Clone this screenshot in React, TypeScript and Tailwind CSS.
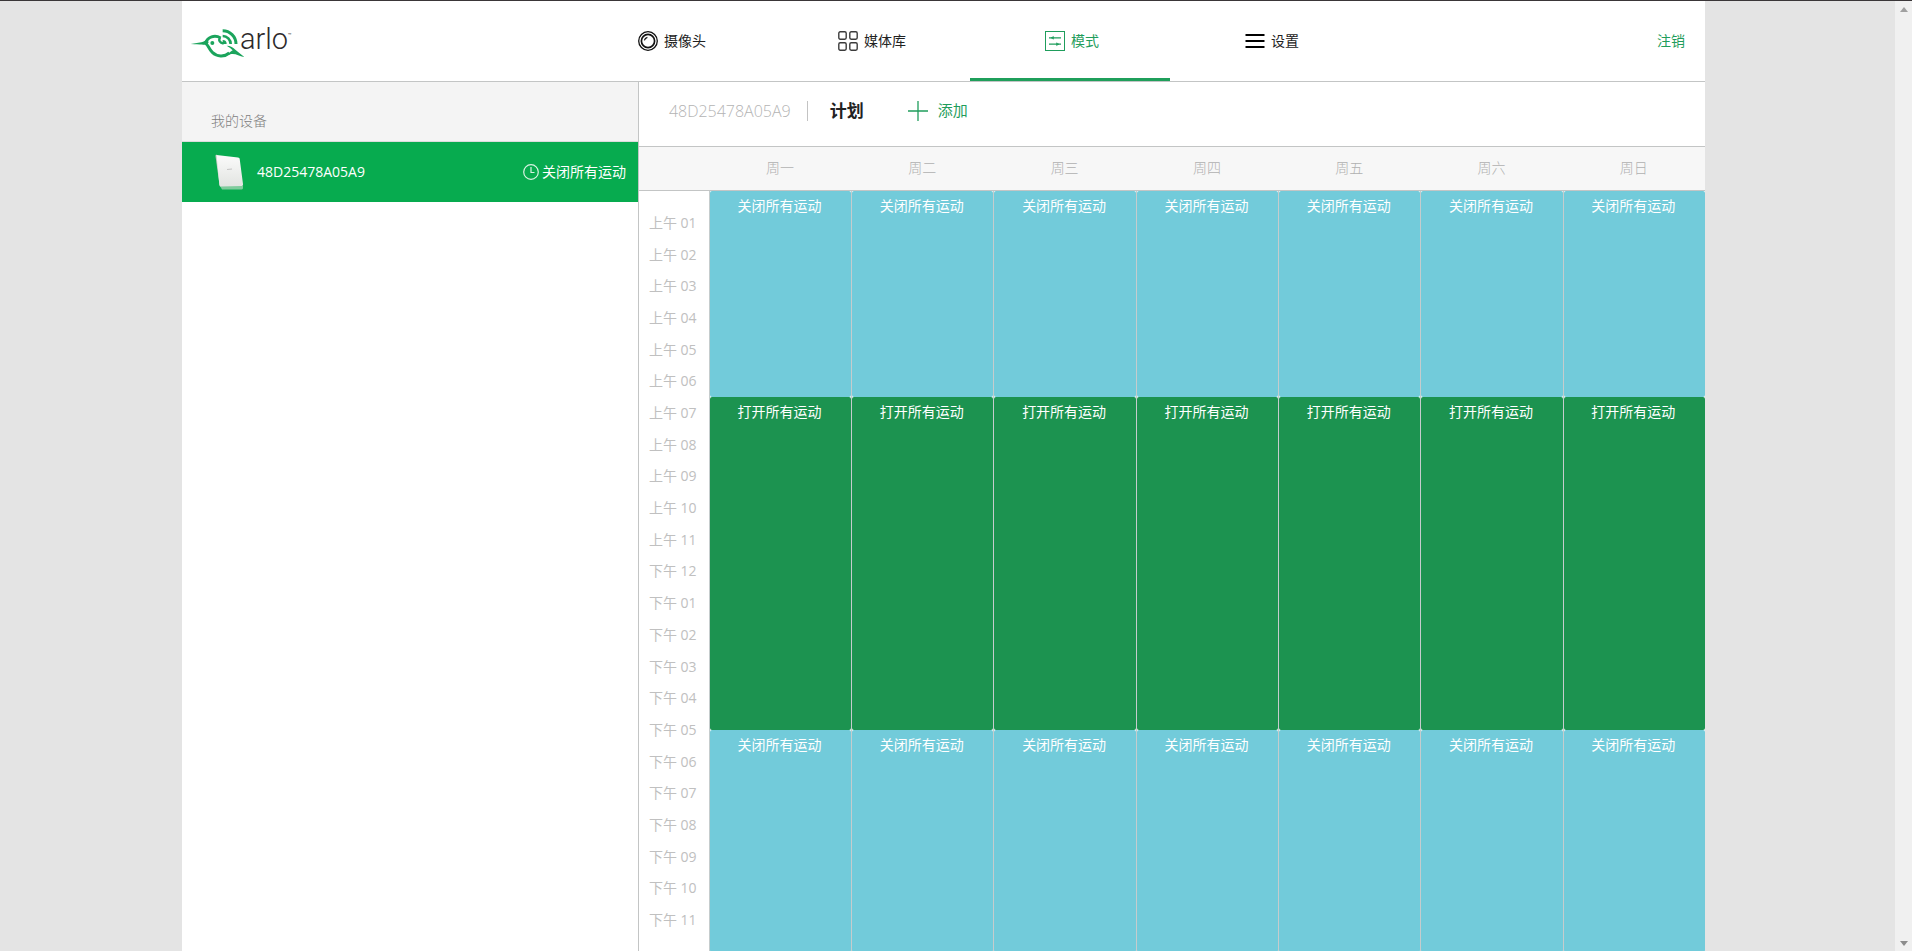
import React from "react";

type Slot = { label: string; halfHours: number; color: string };

const days = ["周一", "周二", "周三", "周四", "周五", "周六", "周日"];

const hours = Array.from({ length: 23 }, (_, i) => {
    const hour = i + 1;
    const shown = hour > 12 ? hour - 12 : hour;
    return `${hour < 12 ? "上午" : "下午"} ${String(shown).padStart(2, "0")}`;
});

// every day follows the same plan, lengths are counted in half hours
const slots: Slot[] = [
    { label: "关闭所有运动", halfHours: 13, color: "bg-[#72cbda]" },
    { label: "打开所有运动", halfHours: 21, color: "bg-[#1c9350]" },
    { label: "关闭所有运动", halfHours: 14, color: "bg-[#72cbda]" },
];

function Logo() {
    return (
        <a href="#home" aria-label="arlo" className="flex items-start pl-2 pt-6 text-[#2e2a2b]">
            <svg width="54" height="32" viewBox="62 76 162 96" fill="none" className="mt-0.5 shrink-0">
                <g stroke="#1ba45c">
                    <path d="M109 124 C114 106 136 98 154 109" strokeWidth="9" />
                    <path d="M109 126 C116 128 118 142 129 152 C143 165 164 167 180 154" strokeWidth="9" />
                    <path d="M160 87 A40 40 0 0 1 200 127" strokeWidth="9" />
                    <path d="M160 103 A24 24 0 0 1 184 127" strokeWidth="8" />
                    <path d="M152 108 C147 116 151 123 163 126" strokeWidth="7" />
                </g>
                <g fill="#1ba45c">
                    <path d="M64 127 L96 122 C104 120 108 117 113 112 L118 122 L112 131 C105 129 96 129 64 127 Z" />
                    <path d="M160 115 A12 12 0 0 1 172 127 L160 127 Z" />
                    <path d="M172 132 C184 132 192 137 198 144 L225 166 C210 163 199 155 186 157 L172 161 C180 151 188 148 190 146 C186 141 180 137 172 132 Z" />
                    <circle cx="129" cy="124" r="6" />
                </g>
            </svg>
            <span className="-ml-1 font-['Roboto'] text-[29px] leading-7 font-light">arlo</span>
            <span className="mt-1 font-['Roboto'] text-[6px] leading-3">™</span>
        </a>
    );
}

function CameraIcon() {
    return (
        <svg width="20" height="20" viewBox="0 0 20 20" fill="none" stroke="#111">
            <circle cx="10" cy="10" r="9.3" strokeWidth="1.3" />
            <circle cx="10" cy="10" r="6.6" strokeWidth="1.7" />
            <path d="M6.4 9.4 A4 4 0 0 1 9.4 6.3" strokeWidth="1.2" />
        </svg>
    );
}

function LibraryIcon() {
    return (
        <svg width="20" height="20" viewBox="0 0 20 20" fill="none" stroke="#3c3c3c" strokeWidth="1.4">
            <rect x="0.8" y="0.8" width="7.4" height="7.4" rx="1.4" />
            <rect x="11.8" y="0.8" width="7.4" height="7.4" rx="1.4" />
            <rect x="0.8" y="11.8" width="7.4" height="7.4" rx="1.4" />
            <rect x="11.8" y="11.8" width="7.4" height="7.4" rx="1.4" />
        </svg>
    );
}

function ModeIcon() {
    return (
        <svg width="20" height="20" viewBox="0 0 20 20" fill="none" stroke="#1f9d5c">
            <rect x="0.5" y="0.5" width="19" height="19" />
            <path d="M4 6.8 H16 M4 13.2 H16" strokeWidth="1.2" />
            <path d="M6 6.8 L8.500 5.4 V8.2 Z M14 13.2 L11.500 11.8 V14.6 Z" fill="#1f9d5c" strokeWidth="0.5" />
        </svg>
    );
}

function MenuIcon() {
    return (
        <svg width="20" height="20" viewBox="0 0 20 20" stroke="#000" strokeWidth="2">
            <path d="M0.5 4 H19.5 M0.5 10 H19.5 M0.5 16 H19.5" />
        </svg>
    );
}

function BaseStation() {
    return (
        <svg width="29" height="36" viewBox="0 0 29 36">
            <defs>
                <linearGradient id="station" x1="0" y1="0" x2="0" y2="1">
                    <stop offset="0" stopColor="#fbfbfb" />
                    <stop offset="1" stopColor="#e2e4e1" />
                </linearGradient>
            </defs>
            <path d="M5 32 H28 V34 C28 35 27 35.5 26 35.5 H7 Z" fill="#7fcb9c" />
            <path d="M0.5 2 C0.5 1 1 0.7 2 0.9 L6 32.5 L4.5 31 Z" fill="#c3c9c3" />
            <path d="M1.5 1 L23 3.500 C24 3.6 24.5 4 24.7 5 L28 30 C28.2 31.5 27.5 32 26.5 32 L6 32.5 C5 32.5 4.6 32 4.4 31 Z" fill="url(#station)" />
            <path d="M12 15.5 L17 15" stroke="#c4c4c4" strokeWidth="1" />
        </svg>
    );
}

const tabs = [
    { id: "cameras", label: "摄像头", icon: <CameraIcon /> },
    { id: "library", label: "媒体库", icon: <LibraryIcon /> },
    { id: "mode", label: "模式", icon: <ModeIcon /> },
    { id: "settings", label: "设置", icon: <MenuIcon /> },
];

function Header() {
    const [active, setActive] = React.useState("mode");

    return (
        <header className="grid h-[81px] shrink-0 grid-cols-[388fr_800px_335fr] border-b border-[#c3c5c5]">
            <Logo />
            <nav className="grid grid-cols-4">
                {tabs.map((tab) => (
                    <a
                        key={tab.id}
                        href={`#${tab.id}`}
                        onClick={() => setActive(tab.id)}
                        className={`flex items-center justify-center gap-1.5 border-b-3 pt-0.5 pl-1 ${active === tab.id ? "border-[#1f9f5b] text-[#1f9d5c]" : "border-transparent text-[#222]"}`}
                    >
                        {tab.icon}
                        {tab.label}
                    </a>
                ))}
            </nav>
            <div className="flex items-center justify-end pr-5">
                <button className="cursor-pointer text-[#1f9d5c]">注销</button>
            </div>
        </header>
    );
}

function Sidebar() {
    return (
        <aside className="w-[30%] shrink-0 border-r border-[#c3c5c5]">
            <h2 className="h-[60px] border-b border-[#dcdcdc] bg-[#f4f4f4] pt-[29px] pl-[29px] leading-5 font-light text-[#808080]">我的设备</h2>
            <button className="flex h-[60px] w-full cursor-pointer items-center bg-[#07ab4f] pr-3 pl-[33px] text-white">
                <BaseStation />
                <span className="ml-[13px]">48D25478A05A9</span>
                <span className="ml-auto flex items-center gap-[3px]">
                    <svg width="16" height="16" viewBox="0 0 16 16" fill="none" stroke="#d9f3e3" strokeWidth="1.2">
                        <circle cx="8" cy="8" r="7.3" />
                        <path d="M8 3 V8.5 H11.5" />
                    </svg>
                    关闭所有运动
                </span>
            </button>
        </aside>
    );
}

function DayColumn() {
    return (
        <div className="flex flex-col border-l border-[#c5cccd]">
            {slots.map((slot, i) => (
                <button
                    key={i}
                    style={{ flexGrow: slot.halfHours }}
                    className={`flex basis-0 cursor-pointer items-start justify-center rounded-xs pr-0.5 leading-[30px] text-white ${slot.color}`}
                >
                    {slot.label}
                </button>
            ))}
        </div>
    );
}

function Schedule() {
    return (
        <main className="flex min-w-0 grow flex-col">
            <div className="flex h-[65px] shrink-0 items-center border-b border-[#c3c5c5] pb-1.5 pl-[30px]">
                <a href="#device" className="text-base font-light text-[#b4b4b4]">48D25478A05A9</a>
                <span className="ml-4 h-5 w-px bg-[#c3c3c3]" />
                <h1 className="ml-[22px] text-[17px] font-bold text-[#222]">计划</h1>
                <button className="ml-11 flex cursor-pointer items-center gap-2.5 text-[15px] text-[#1f9d5c]">
                    <svg width="20" height="20" viewBox="0 0 20 20" stroke="#1f9d5c" strokeWidth="1.3">
                        <path d="M10 0 V20 M0 10 H20" />
                    </svg>
                    添加
                </button>
            </div>
            <div className="grid h-11 shrink-0 grid-cols-7 items-center border-b border-[#c3c5c5] bg-[#f7f7f7] pb-0.5 pl-[70px] text-center font-light text-[#b0b0b0]">
                {days.map((day) => (
                    <span key={day}>{day}</span>
                ))}
            </div>
            <div className="flex h-[761px] shrink-0">
                <ol className="grid w-[70px] shrink-0 auto-rows-fr items-center pt-4 pb-4 pl-2.5 text-[#c0c0c0]">
                    {hours.map((hour) => (
                        <li key={hour} className="leading-5 whitespace-nowrap">{hour}</li>
                    ))}
                </ol>
                <div className="grid grow grid-cols-7">
                    {days.map((day) => (
                        <DayColumn key={day} />
                    ))}
                </div>
            </div>
        </main>
    );
}

export default function App() {
    return (
        <div className="grid h-screen grid-cols-[182fr_1523fr_190fr_17px] overflow-hidden border-t border-[#3a3638] bg-[#e4e4e4] font-['Open_Sans','Noto_Sans_CJK_SC',sans-serif] text-sm">
            <div className="col-start-2 flex min-w-0 flex-col bg-white">
                <Header />
                <div className="flex grow">
                    <Sidebar />
                    <Schedule />
                </div>
            </div>
            <div className="col-start-4 flex flex-col items-center justify-between bg-[#f0f0f0] pt-1.5 pb-1.5">
                <svg width="8" height="5" viewBox="0 0 8 5" fill="#a0a0a0"><path d="M0 5 L4 0 L8 5 Z" /></svg>
                <svg width="8" height="5" viewBox="0 0 8 5" fill="#8c8c8c"><path d="M0 0 L4 5 L8 0 Z" /></svg>
            </div>
        </div>
    );
}
